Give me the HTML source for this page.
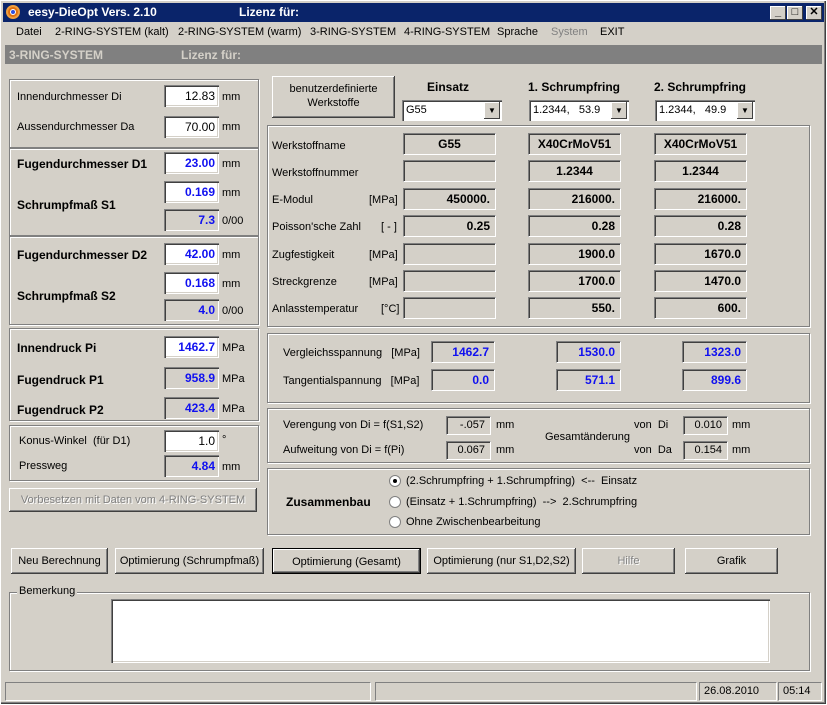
<!DOCTYPE html>
<html><head><meta charset="utf-8"><style>
*{margin:0;padding:0;box-sizing:border-box}
body{width:827px;height:705px;background:#d4d0c8;font-family:"Liberation Sans",sans-serif;font-size:11px;color:#000;position:relative;overflow:hidden}
div,span{position:absolute}
.win{left:0;top:0;width:827px;height:705px;border:1px solid #fff;box-shadow:inset -1px -1px #404040,inset -2px -2px #808080}
.tb{left:3px;top:3px;width:821px;height:19px;background:#0a246a;color:#fff;font-weight:bold;font-size:12px}
.tbb{top:3px;width:16px;height:14px;background:#d4d0c8;box-shadow:inset -1px -1px #404040,inset 1px 1px #fff;color:#000;font-size:11px;line-height:13px;text-align:center}
.g{border:1px solid #808080;box-shadow:1px 1px #fff,inset 1px 1px #fff}
.f{height:22px;box-shadow:inset 1px 1px #808080,inset 2px 2px #404040,inset -1px -1px #fff,inset -2px -2px #d4d0c8;text-align:right;padding:4px 4px 0 0;font-size:12px}
.w{background:#fff}
.gr{background:#d4d0c8}
.bl{color:#1010f0;font-weight:bold}
.bo{font-weight:bold;font-size:12px}
.r{height:22px;border-top:1px solid #808080;border-left:1px solid #808080;border-right:1px solid #fff;border-bottom:1px solid #fff;box-shadow:inset 1px 1px #404040;text-align:right;padding:3px 5px 0 0;font-weight:bold;font-size:12px}
.btn{height:26px;box-shadow:inset -1px -1px #404040,inset 1px 1px #fff,inset -2px -2px #808080;text-align:center;line-height:26px;white-space:nowrap}
.lb{white-space:nowrap}
.cb{height:21px;background:#fff;box-shadow:inset 1px 1px #808080,inset 2px 2px #404040,inset -1px -1px #fff;padding:4px 0 0 4px}
.cb i{position:absolute;right:2px;top:2px;width:16px;height:17px;background:#d4d0c8;box-shadow:inset -1px -1px #404040,inset 1px 1px #fff;font-style:normal;font-size:8px;text-align:center;line-height:17px}
.rd{width:12px;height:12px;border-radius:50%;background:#fff;border:1px solid #808080}
.sb{top:682px;height:19px;border-top:1px solid #808080;border-left:1px solid #808080;border-right:1px solid #fff;border-bottom:1px solid #fff;padding:2px 4px}
</style></head><body>
<div class="win"></div>
<div class="tb">
<span style="left:3px;top:2px;width:14px;height:14px;border-radius:50%;background:#e07010;border:2px solid #f0a040"></span>
<span style="left:7px;top:6px;width:6px;height:6px;border-radius:50%;background:#3050e0;border:1px solid #fff"></span>
<span style="left:25px;top:2px">eesy-DieOpt Vers. 2.10</span>
<span style="left:236px;top:2px">Lizenz für:</span>
<span class="tbb" style="left:767px">_</span><span class="tbb" style="left:784px">□</span><span class="tbb" style="left:803px">✕</span>
</div>
<div class="lb" style="left:16px;top:26px">Datei</div>
<div class="lb" style="left:55px;top:26px">2-RING-SYSTEM (kalt)</div>
<div class="lb" style="left:178px;top:26px">2-RING-SYSTEM (warm)</div>
<div class="lb" style="left:310px;top:26px">3-RING-SYSTEM</div>
<div class="lb" style="left:404px;top:26px">4-RING-SYSTEM</div>
<div class="lb" style="left:497px;top:26px">Sprache</div>
<div class="lb" style="left:551px;top:26px;color:#808080">System</div>
<div class="lb" style="left:600px;top:26px">EXIT</div>
<div style="left:5px;top:45px;width:817px;height:19px;background:#808080;color:#d4d0c8;font-weight:bold;font-size:12px">
<span style="left:4px;top:3px">3-RING-SYSTEM</span><span style="left:176px;top:3px">Lizenz für:</span></div>

<!-- left -->
<div class="g" style="left:9px;top:79px;width:250px;height:69px"></div>
<div class="lb" style="left:17px;top:91px">Innendurchmesser Di</div>
<div class="f w" style="left:164px;top:85px;width:55px">12.83</div><div class="lb" style="left:222px;top:91px">mm</div>
<div class="lb" style="left:17px;top:121px">Aussendurchmesser Da</div>
<div class="f w" style="left:164px;top:116px;width:55px">70.00</div><div class="lb" style="left:222px;top:121px">mm</div>

<div class="g" style="left:9px;top:148px;width:250px;height:88px"></div>
<div class="lb bo" style="left:17px;top:157px">Fugendurchmesser D1</div>
<div class="f w bl" style="left:164px;top:152px;width:55px">23.00</div><div class="lb" style="left:222px;top:158px">mm</div>
<div class="lb bo" style="left:17px;top:198px">Schrumpfmaß S1</div>
<div class="f w bl" style="left:164px;top:181px;width:55px">0.169</div><div class="lb" style="left:222px;top:187px">mm</div>
<div class="f gr bl" style="left:164px;top:209px;width:55px">7.3</div><div class="lb" style="left:222px;top:215px">0/00</div>

<div class="g" style="left:9px;top:236px;width:250px;height:89px"></div>
<div class="lb bo" style="left:17px;top:248px">Fugendurchmesser D2</div>
<div class="f w bl" style="left:164px;top:243px;width:55px">42.00</div><div class="lb" style="left:222px;top:249px">mm</div>
<div class="lb bo" style="left:17px;top:289px">Schrumpfmaß S2</div>
<div class="f w bl" style="left:164px;top:272px;width:55px">0.168</div><div class="lb" style="left:222px;top:278px">mm</div>
<div class="f gr bl" style="left:164px;top:299px;width:55px">4.0</div><div class="lb" style="left:222px;top:305px">0/00</div>

<div class="g" style="left:9px;top:328px;width:250px;height:93px"></div>
<div class="lb bo" style="left:17px;top:341px">Innendruck Pi</div>
<div class="f w bl" style="left:164px;top:336px;width:55px">1462.7</div><div class="lb" style="left:222px;top:342px">MPa</div>
<div class="lb bo" style="left:17px;top:373px">Fugendruck P1</div>
<div class="f gr bl" style="left:164px;top:367px;width:55px">958.9</div><div class="lb" style="left:222px;top:373px">MPa</div>
<div class="lb bo" style="left:17px;top:403px">Fugendruck P2</div>
<div class="f gr bl" style="left:164px;top:397px;width:55px">423.4</div><div class="lb" style="left:222px;top:403px">MPa</div>

<div class="g" style="left:9px;top:425px;width:250px;height:56px"></div>
<div class="lb" style="left:19px;top:435px">Konus-Winkel&nbsp; (für D1)</div>
<div class="f w" style="left:164px;top:430px;width:55px">1.0</div><div class="lb" style="left:222px;top:434px">°</div>
<div class="lb" style="left:19px;top:460px">Pressweg</div>
<div class="f gr bl" style="left:164px;top:455px;width:55px">4.84</div><div class="lb" style="left:222px;top:461px">mm</div>
<div class="btn" style="left:9px;top:488px;width:248px;height:24px;line-height:24px;color:#808080;text-shadow:1px 1px #fff">Vorbesetzen mit Daten vom 4-RING-SYSTEM</div>

<!-- right -->
<div class="btn" style="left:272px;top:76px;width:123px;height:42px;line-height:14px;padding-top:6px">benutzerdefinierte<br>Werkstoffe</div>
<div class="lb bo" style="left:427px;top:80px">Einsatz</div>
<div class="lb bo" style="left:528px;top:80px">1. Schrumpfring</div>
<div class="lb bo" style="left:654px;top:80px">2. Schrumpfring</div>
<div class="cb" style="left:402px;top:100px;width:100px">G55<i>▼</i></div>
<div class="cb" style="left:529px;top:100px;width:100px">1.2344,&nbsp;&nbsp; 53.9<i>▼</i></div>
<div class="cb" style="left:655px;top:100px;width:100px">1.2344,&nbsp;&nbsp; 49.9<i>▼</i></div>

<div class="g" style="left:267px;top:125px;width:543px;height:202px"></div>
<div class="lb" style="left:272px;top:140px">Werkstoffname</div>
<div class="lb" style="left:272px;top:167px">Werkstoffnummer</div>
<div class="lb" style="left:272px;top:194px">E-Modul</div><div class="lb" style="left:369px;top:194px">[MPa]</div>
<div class="lb" style="left:272px;top:221px">Poisson'sche Zahl</div><div class="lb" style="left:381px;top:221px">[ - ]</div>
<div class="lb" style="left:272px;top:249px">Zugfestigkeit</div><div class="lb" style="left:369px;top:249px">[MPa]</div>
<div class="lb" style="left:272px;top:276px">Streckgrenze</div><div class="lb" style="left:369px;top:276px">[MPa]</div>
<div class="lb" style="left:272px;top:303px">Anlasstemperatur</div><div class="lb" style="left:381px;top:303px">[°C]</div>

<div class="r" style="left:403px;top:133px;width:93px;text-align:center;padding-right:0">G55</div>
<div class="r" style="left:403px;top:160px;width:93px"></div>
<div class="r" style="left:403px;top:188px;width:93px">450000.</div>
<div class="r" style="left:403px;top:215px;width:93px">0.25</div>
<div class="r" style="left:403px;top:243px;width:93px"></div>
<div class="r" style="left:403px;top:270px;width:93px"></div>
<div class="r" style="left:403px;top:297px;width:93px"></div>

<div class="r" style="left:528px;top:133px;width:93px;text-align:center;padding-right:0">X40CrMoV51</div>
<div class="r" style="left:528px;top:160px;width:93px;text-align:center;padding-right:0">1.2344</div>
<div class="r" style="left:528px;top:188px;width:93px">216000.</div>
<div class="r" style="left:528px;top:215px;width:93px">0.28</div>
<div class="r" style="left:528px;top:243px;width:93px">1900.0</div>
<div class="r" style="left:528px;top:270px;width:93px">1700.0</div>
<div class="r" style="left:528px;top:297px;width:93px">550.</div>

<div class="r" style="left:654px;top:133px;width:93px;text-align:center;padding-right:0">X40CrMoV51</div>
<div class="r" style="left:654px;top:160px;width:93px;text-align:center;padding-right:0">1.2344</div>
<div class="r" style="left:654px;top:188px;width:93px">216000.</div>
<div class="r" style="left:654px;top:215px;width:93px">0.28</div>
<div class="r" style="left:654px;top:243px;width:93px">1670.0</div>
<div class="r" style="left:654px;top:270px;width:93px">1470.0</div>
<div class="r" style="left:654px;top:297px;width:93px">600.</div>

<div class="g" style="left:267px;top:333px;width:543px;height:70px"></div>
<div class="lb" style="left:283px;top:347px">Vergleichsspannung&nbsp;&nbsp; [MPa]</div>
<div class="lb" style="left:283px;top:375px">Tangentialspannung&nbsp;&nbsp; [MPa]</div>
<div class="r bl" style="left:431px;top:341px;width:64px">1462.7</div>
<div class="r bl" style="left:431px;top:369px;width:64px">0.0</div>
<div class="r bl" style="left:556px;top:341px;width:65px">1530.0</div>
<div class="r bl" style="left:556px;top:369px;width:65px">571.1</div>
<div class="r bl" style="left:682px;top:341px;width:65px">1323.0</div>
<div class="r bl" style="left:682px;top:369px;width:65px">899.6</div>

<div class="g" style="left:267px;top:408px;width:543px;height:55px"></div>
<div class="lb" style="left:283px;top:419px">Verengung von Di = f(S1,S2)</div>
<div class="lb" style="left:283px;top:444px">Aufweitung von Di = f(Pi)</div>
<div class="r" style="left:446px;top:416px;width:45px;height:19px;font-weight:normal;font-size:11px;padding-top:2px">-.057</div><div class="lb" style="left:496px;top:419px">mm</div>
<div class="r" style="left:446px;top:441px;width:45px;height:19px;font-weight:normal;font-size:11px;padding-top:2px">0.067</div><div class="lb" style="left:496px;top:444px">mm</div>
<div class="lb" style="left:545px;top:431px">Gesamtänderung</div>
<div class="lb" style="left:634px;top:419px">von&nbsp; Di</div>
<div class="lb" style="left:634px;top:444px">von&nbsp; Da</div>
<div class="r" style="left:683px;top:416px;width:45px;height:19px;font-weight:normal;font-size:11px;padding-top:2px">0.010</div><div class="lb" style="left:732px;top:419px">mm</div>
<div class="r" style="left:683px;top:441px;width:45px;height:19px;font-weight:normal;font-size:11px;padding-top:2px">0.154</div><div class="lb" style="left:732px;top:444px">mm</div>

<div class="g" style="left:267px;top:468px;width:543px;height:67px"></div>
<div class="lb bo" style="left:286px;top:495px">Zusammenbau</div>
<div class="rd" style="left:389px;top:475px"><span style="left:3px;top:3px;width:4px;height:4px;border-radius:50%;background:#000"></span></div>
<div class="lb" style="left:406px;top:475px">(2.Schrumpfring + 1.Schrumpfring)&nbsp; &lt;--&nbsp; Einsatz</div>
<div class="rd" style="left:389px;top:496px"></div>
<div class="lb" style="left:406px;top:496px">(Einsatz + 1.Schrumpfring)&nbsp; --&gt;&nbsp; 2.Schrumpfring</div>
<div class="rd" style="left:389px;top:516px"></div>
<div class="lb" style="left:406px;top:516px">Ohne Zwischenbearbeitung</div>

<div class="btn" style="left:11px;top:548px;width:97px">Neu Berechnung</div>
<div class="btn" style="left:115px;top:548px;width:149px">Optimierung (Schrumpfmaß)</div>
<div class="btn" style="left:272px;top:548px;width:149px;border:1px solid #000">Optimierung (Gesamt)</div>
<div class="btn" style="left:427px;top:548px;width:149px">Optimierung (nur S1,D2,S2)</div>
<div class="btn" style="left:582px;top:548px;width:93px;color:#808080;text-shadow:1px 1px #fff">Hilfe</div>
<div class="btn" style="left:685px;top:548px;width:93px">Grafik</div>

<div class="g" style="left:9px;top:592px;width:801px;height:79px"></div>
<div class="lb" style="left:17px;top:585px;background:#d4d0c8;padding:0 2px">Bemerkung</div>
<div class="f w" style="left:111px;top:599px;width:659px;height:64px"></div>

<div class="sb" style="left:5px;width:366px"></div>
<div class="sb" style="left:375px;width:322px"></div>
<div class="sb" style="left:699px;width:78px">26.08.2010</div>
<div class="sb" style="left:778px;width:44px">05:14</div>
</body></html>
